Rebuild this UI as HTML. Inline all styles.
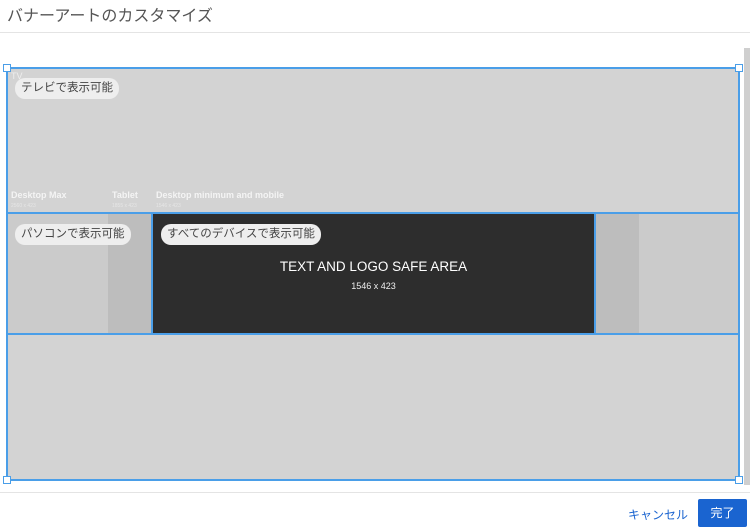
<!DOCTYPE html>
<html><head><meta charset="utf-8"><style>
*{margin:0;padding:0;box-sizing:border-box}
body{width:750px;height:531px;background:#fff;position:relative;overflow:hidden;font-family:"Liberation Sans","Noto Sans CJK JP",sans-serif}
.a{position:absolute}
.pill{position:absolute;background:#eeeeee;border-radius:10px;font-size:11.5px;color:#444;padding:0 6px;height:21px;line-height:21px}
.lbl{position:absolute;color:#f4f4f4;font-size:9px;font-weight:bold}
.sub{position:absolute;color:#e6e6e6;font-size:5px}
.h{position:absolute;width:8px;height:8px;background:#fff;border:1px solid #4a9ee8}
</style></head><body>
<div class="a" style="left:7px;top:2px;font-size:16px;color:#555">バナーアートのカスタマイズ</div>
<div class="a" style="left:0;top:32px;width:750px;height:1px;background:#e4e4e4"></div>
<div class="a" style="left:744px;top:48px;width:6px;height:437px;background:#cfcfcf"></div>
<div class="a" style="left:6px;top:67px;width:734px;height:414px;background:#d3d3d3;border:2px solid #4a9ee8"></div>
<div class="a" style="left:6px;top:212px;width:734px;height:123px;border:2px solid #4a9ee8;background:#cbcbcb"></div>
<div class="a" style="left:108px;top:214px;width:44px;height:119px;background:#bdbdbd"></div>
<div class="a" style="left:595px;top:214px;width:44px;height:119px;background:#bdbdbd"></div>
<div class="a" style="left:151px;top:212px;width:445px;height:123px;background:#2d2d2d;border:2px solid #4a9ee8"></div>
<div class="a" style="left:152px;top:259px;width:443px;text-align:center;color:#fff;font-size:13.5px">TEXT AND LOGO SAFE AREA</div>
<div class="a" style="left:152px;top:281px;width:443px;text-align:center;color:#eee;font-size:9px">1546 x 423</div>
<div class="a" style="left:11px;top:71px;color:#eee;font-size:9px">TV</div>
<div class="pill" style="left:15px;top:78px">テレビで表示可能</div>
<div class="lbl" style="left:11px;top:190px">Desktop Max</div>
<div class="sub" style="left:11px;top:203px">2560 x 423</div>
<div class="lbl" style="left:112px;top:190px">Tablet</div>
<div class="sub" style="left:112px;top:203px">1855 x 423</div>
<div class="lbl" style="left:156px;top:190px">Desktop minimum and mobile</div>
<div class="sub" style="left:156px;top:203px">1546 x 423</div>
<div class="pill" style="left:15px;top:224px">パソコンで表示可能</div>
<div class="pill" style="left:161px;top:224px">すべてのデバイスで表示可能</div>
<div class="h" style="left:3px;top:64px"></div>
<div class="h" style="left:735px;top:64px"></div>
<div class="h" style="left:3px;top:476px"></div>
<div class="h" style="left:735px;top:476px"></div>
<div class="a" style="left:0;top:492px;width:750px;height:1px;background:#e4e4e4"></div>
<div class="a" style="left:628px;top:506px;font-size:12px;color:#1a64d0">キャンセル</div>
<div class="a" style="left:698px;top:499px;width:49px;height:28px;background:#1a64d0;border-radius:2px;color:#fff;font-size:12px;text-align:center;line-height:28px">完了</div>
</body></html>
